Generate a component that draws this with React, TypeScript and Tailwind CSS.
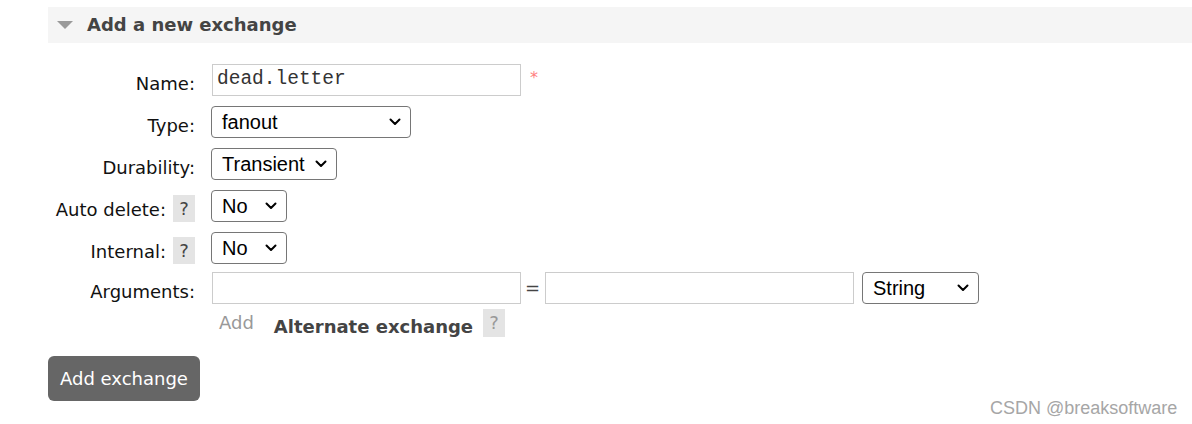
import type { ReactNode } from 'react';

const sans = "font-['DejaVu_Sans',Verdana,sans-serif]";
const arial = "font-['Liberation_Sans',Arial,sans-serif]";

const Chevron = () => (
  <svg width="12" height="8" viewBox="0 0 12 8" className="shrink-0">
    <path d="M1.5 1.5 L6 6 L10.5 1.5" fill="none" stroke="#000" strokeWidth="2" strokeLinecap="round" strokeLinejoin="round" />
  </svg>
);

const Select = ({ value, width }: { value: string; width: string }) => (
  <div
    className={`${arial} ${width} h-[32px] flex items-center justify-between pl-[10px] pr-[9px] border border-[#767676] rounded-[4px] bg-white text-[20px] text-black`}
  >
    <span className="leading-none">{value}</span>
    <Chevron />
  </div>
);

const Input = ({ value = '' }: { value?: string }) => (
  <div className="w-[309px] h-[32px] ml-px flex items-center px-[4px] border border-[#cccccc] bg-white font-['Liberation_Mono','Courier_New',monospace] text-[19.5px] text-[#333]">
    {value}
  </div>
);

const Help = () => (
  <span className="w-[22px] h-[27px] mt-[5px] flex items-center justify-center bg-[#e4e4e4] text-[#444] text-[18px] leading-none">
    ?
  </span>
);

const Row = ({ label, help, children, className = '' }: { label: string; help?: boolean; children: ReactNode; className?: string }) => (
  <div className={`flex items-start h-[32px] ${className}`}>
    <div className="w-[147px] flex justify-end items-start gap-[7px]">
      <span className="pt-[8px] leading-[24px] whitespace-nowrap">{label}</span>
      {help && <Help />}
    </div>
    <div className="ml-[16px] flex items-start">{children}</div>
  </div>
);

export default function App() {
  return (
    <div className={`relative w-[1192px] h-[424px] overflow-hidden bg-white ${sans} text-[18px] text-[#111]`}>
      <div className="pl-[48px] pt-[7px]">
        <div className="h-[36px] bg-[#f5f5f5] flex items-center">
          <svg width="16" height="8" viewBox="0 0 16 8" className="ml-[9px]">
            <path d="M0 0 H16 L8 8 Z" fill="#9a9a9a" />
          </svg>
          <h2 className="ml-[14px] font-bold text-[18px] leading-[24px] text-[#444]">Add a new exchange</h2>
        </div>

        <div className="mt-[21px] flex flex-col">
          <Row label="Name:">
            <Input value="dead.letter" />
            <span className="ml-[9px] mt-[6px] text-[16px] leading-[16px] text-[#ff8080]">*</span>
          </Row>
          <Row label="Type:" className="mt-[10px]">
            <Select value="fanout" width="w-[200px]" />
          </Row>
          <Row label="Durability:" className="mt-[10px]">
            <Select value="Transient" width="w-[126px]" />
          </Row>
          <Row label="Auto delete:" help className="mt-[10px]">
            <Select value="No" width="w-[76px]" />
          </Row>
          <Row label="Internal:" help className="mt-[10px]">
            <Select value="No" width="w-[76px]" />
          </Row>
          <Row label="Arguments:" className="mt-[8px]">
            <Input />
            <span className="w-[23px] pt-[4px] text-center leading-[24px] text-[#444]">=</span>
            <Input />
            <div className="ml-[8px]">
              <Select value="String" width="w-[117px]" />
            </div>
          </Row>
          <div className="flex items-start ml-[163px] mt-[5px]">
            <span className="ml-[8px] pt-[2px] leading-[24px] text-[#999]">Add</span>
            <span className="ml-[20px] pt-[6px] leading-[24px] font-bold text-[#444]">Alternate exchange</span>
            <span className="ml-[10px] w-[22px] h-[28px] flex items-center justify-center bg-[#e4e4e4] text-[#999] leading-none">
              ?
            </span>
          </div>
        </div>

        <button className="mt-[17px] w-[152px] h-[45px] rounded-[6px] bg-[#666666] text-white text-[18px] leading-[24px]">
          Add exchange
        </button>
      </div>

      <span className={`absolute left-[990px] top-[399px] ${arial} text-[18px] leading-[18px] text-[#a6a6a6]`}>
        CSDN @breaksoftware
      </span>
    </div>
  );
}
